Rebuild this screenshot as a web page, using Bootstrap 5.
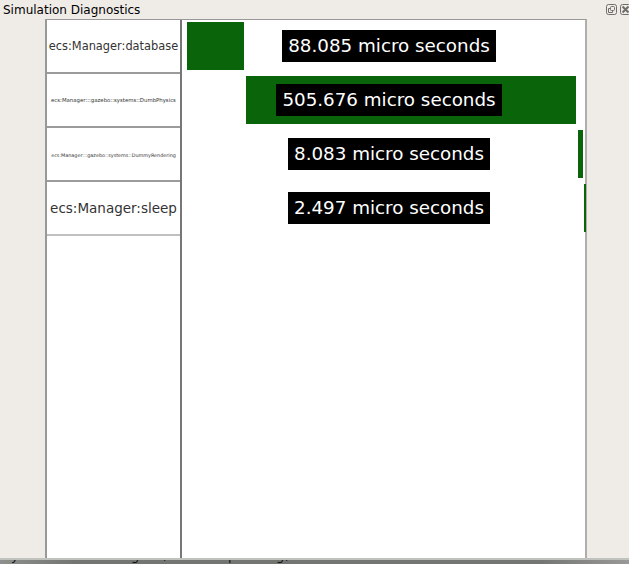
<!DOCTYPE html>
<html lang="en">
<head>
<meta charset="utf-8">
<title>Simulation Diagnostics</title>
<link rel="stylesheet" href="https://cdn.jsdelivr.net/npm/bootstrap@5.3.0/dist/css/bootstrap.min.css">
<style>
body{width:629px;height:564px;background:#efebe7;font-family:"DejaVu Sans",sans-serif;color:#000;line-height:1}
.titlebar{height:19px;padding-left:3px}
.titlebar h1{font-size:12px;margin:0;line-height:20px}
.tools{gap:3px;margin-right:-2px}
.chart{width:542px;height:539px;margin-left:45px;background:#fff;border:solid #999;border-width:1px 2px 0;border-right-color:#b0aeac}
.names{width:135px;border-right:2px solid #777}
.name{height:54px;padding-top:2px;border-bottom:2px solid #9b9b9b;color:#333;white-space:nowrap}
.name:last-child{border-color:#c0c0c0}
.fs-a{font-size:11.4px}.fs-b{font-size:5.38px}.fs-c{font-size:4.88px}.fs-d{font-size:13.5px}
.track{height:54px;position:relative}
.bar{position:absolute;top:2px;height:48.4px;background:#0a640a}
.tag{position:relative;height:32px;padding:0 6px;margin:0 -11px 2px 0;background:#000;color:#fff;font-size:18.3px;line-height:31px;white-space:nowrap}
.under{height:6px;border-top:2px solid #c0c2be;background:linear-gradient(90deg,#8d8f8c,#737572 12%,#747673 86%,#999a97);position:relative}
.under span{position:absolute;bottom:1px;font-size:13px;line-height:15px;color:#111;clip-path:inset(12px 0 0 0)}
</style>
<script src="https://cdn.jsdelivr.net/npm/bootstrap@5.3.0/dist/js/bootstrap.bundle.min.js"></script>
</head>
<body class="overflow-hidden d-flex flex-column">
<header class="titlebar d-flex justify-content-between align-items-center flex-shrink-0">
  <h1 class="fw-normal">Simulation Diagnostics</h1>
  <div class="tools d-flex">
    <svg width="11" height="11" viewBox="0 0 11 11" fill="none" stroke="#706e6b"><rect x=".5" y=".5" width="10" height="10" rx="2"/><rect x="4.5" y="2.5" width="4" height="4" rx="1"/><path d="M4.5 4.5h-2v4h4v-2"/></svg>
    <svg width="11" height="11" viewBox="0 0 11 11" fill="none" stroke="#706e6b"><rect x=".5" y=".5" width="10" height="10" rx="2"/><path stroke-width="2" d="m2.5 2.5 6 6m0-6-6 6"/></svg>
  </div>
</header>
<main class="chart d-flex flex-shrink-0">
  <div class="names flex-shrink-0">
    <div class="name fs-a d-flex align-items-center justify-content-center">ecs:Manager:database</div>
    <div class="name fs-b d-flex align-items-center justify-content-center">ecs:Manager:::gazebo::systems::DumbPhysics</div>
    <div class="name fs-c d-flex align-items-center justify-content-center">ecs:Manager:::gazebo::systems::DummyRendering</div>
    <div class="name fs-d d-flex align-items-center justify-content-center">ecs:Manager:sleep</div>
  </div>
  <div class="flex-grow-1">
    <div class="track d-flex align-items-center justify-content-center"><div class="bar" style="left:5px;width:57px"></div><div class="tag">88.085 micro seconds</div></div>
    <div class="track d-flex align-items-center justify-content-center"><div class="bar" style="left:64.3px;width:329.5px"></div><div class="tag">505.676 micro seconds</div></div>
    <div class="track d-flex align-items-center justify-content-center"><div class="bar" style="left:396px;width:5px"></div><div class="tag">8.083 micro seconds</div></div>
    <div class="track d-flex align-items-center justify-content-center"><div class="bar" style="left:402px;width:1.5px"></div><div class="tag">2.497 micro seconds</div></div>
  </div>
</main>
<footer class="under flex-shrink-0 overflow-hidden">
  <span style="left:11px">y</span><span style="left:131px">g</span><span style="left:163px">,</span><span style="left:228px">p</span><span style="left:276px">g</span><span style="left:285px">;</span>
</footer>
</body>
</html>
